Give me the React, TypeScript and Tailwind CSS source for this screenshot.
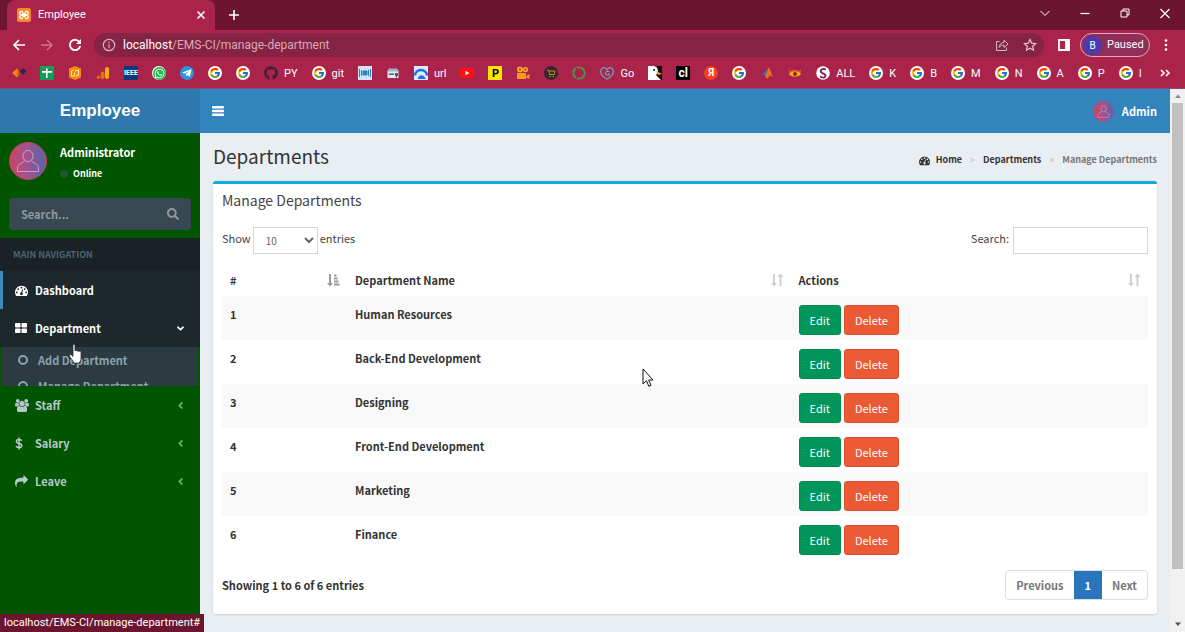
import type { ReactNode } from "react";
import { FcGoogle } from "react-icons/fc";
import { FaAngleDown, FaAngleLeft, FaGithub, FaSearch, FaWhatsapp, FaTelegramPlane } from "react-icons/fa";

const PAGE_FONT = "font-['Noto_Sans_CJK_SC',sans-serif]";
const CHROME_FONT = "font-['Roboto',sans-serif]";

/* ---------- icons ---------- */

function DashboardIcon({ className }: { className: string }) {
  return (
    <svg viewBox="0 0 1792 1792" fill="currentColor" className={className} aria-hidden="true">
      <path d="M384 1152q0-53-37.5-90.5t-90.5-37.5-90.5 37.5-37.5 90.5 37.5 90.5 90.5 37.5 90.5-37.5 37.5-90.5zm192-448q0-53-37.5-90.5t-90.5-37.5-90.5 37.5-37.5 90.5 37.5 90.5 90.5 37.5 90.5-37.5 37.5-90.5zm428 481l101-382q6-26-7.5-48.5t-38.5-29.5-48 6.5-30 39.5l-101 382q-60 5-107 43.5t-63 98.5q-20 77 20 146t117 89 146-20 89-117q16-60-6-117t-72-91zm660-33q0-53-37.5-90.5t-90.5-37.5-90.5 37.5-37.5 90.5 37.5 90.5 90.5 37.5 90.5-37.5 37.5-90.5zm-640-640q0-53-37.5-90.5t-90.5-37.5-90.5 37.5-37.5 90.5 37.5 90.5 90.5 37.5 90.5-37.5 37.5-90.5zm448 192q0-53-37.5-90.5t-90.5-37.5-90.5 37.5-37.5 90.5 37.5 90.5 90.5 37.5 90.5-37.5 37.5-90.5zm320 448q0 261-141 483-19 29-54 29h-1402q-35 0-54-29-141-221-141-483 0-182 71-348t191-286 286-191 348-71 348 71 286 191 191 286 71 348z" />
    </svg>
  );
}

function GridIcon() {
  return (
    <svg viewBox="0 0 12 12" fill="currentColor" className="size-3" aria-hidden="true">
      <rect x="0" y="1" width="5.5" height="4.5" rx=".8" />
      <rect x="6.5" y="1" width="5.5" height="4.5" rx=".8" />
      <rect x="0" y="6.5" width="5.5" height="4.5" rx=".8" />
      <rect x="6.5" y="6.5" width="5.5" height="4.5" rx=".8" />
    </svg>
  );
}

function UsersIcon() {
  return (
    <svg viewBox="0 0 1920 1792" fill="currentColor" className="h-[13px] w-3.5" aria-hidden="true">
      <path d="M593 896q-162 5-265 128h-134q-82 0-138-40.500t-56-118.500q0-353 124-353 6 0 43.500 21t97.500 42.500 119 21.500q67 0 133-23-5 37-5 66 0 139 81 256zm1071 637q0 120-73 189.500t-194 69.500h-874q-121 0-194-69.500t-73-189.500q0-53 3.500-103.500t14-109 26.500-108.500 43-97.500 62-81 85.500-53.500 111.500-20q10 0 43 21.500t73 48 107 48 135 21.500 135-21.500 107-48 73-48 43-21.500q61 0 111.500 20t85.500 53.500 62 81 43 97.500 26.500 108.500 14 109 3.500 103.500zm-1024-1277q0 106-75 181t-181 75-181-75-75-181 75-181 181-75 181 75 75 181zm704 384q0 159-112.500 271.500t-271.500 112.500-271.500-112.500-112.500-271.500 112.500-271.500 271.500-112.500 271.500 112.500 112.500 271.500zm576 225q0 78-56 118.500t-138 40.500h-134q-103-123-265-128 81-117 81-256 0-29-5-66 66 23 133 23 59 0 119-21.500t97.500-42.500 43.500-21q124 0 124 353zm-128-609q0 106-75 181t-181 75-181-75-75-181 75-181 181-75 181 75 75 181z" />
    </svg>
  );
}

function ShareArrowIcon() {
  return (
    <svg viewBox="0 0 1792 1792" fill="currentColor" className="size-[13px]" aria-hidden="true">
      <path d="M1792 640q0 26-19 45l-512 512q-19 19-45 19t-45-19-19-45v-256h-224q-98 0-175.5 6t-154 21.5-133 42.5-105.5 69.5-80 101-48.5 138.5-17.5 181q0 55 5 123 0 6 2.5 23.5t2.5 26.5q0 15-8.5 25t-23.5 10q-16 0-28-17-7-9-13-22t-13.5-30-10.5-24q-127-285-127-451 0-199 53-333 162-403 875-403h224v-256q0-26 19-45t45-19 45 19l512 512q19 19 19 45z" />
    </svg>
  );
}

function DollarIcon() {
  return (
    <svg viewBox="0 0 8 13" fill="none" stroke="currentColor" strokeWidth="1.5" className="h-[13px] w-2" aria-hidden="true">
      <path d="M4 .5v12M6.8 3.6C6 2.8 5 2.4 4 2.4 2.500 2.400 1.400 3.200 1.400 4.400 1.400 7.200 6.800 5.600 6.800 8.500 6.800 9.800 5.600 10.600 4 10.600 2.800 10.600 1.700 10.100.9 9.300" />
    </svg>
  );
}

function Avatar({ className, id }: { className: string; id: string }) {
  return (
    <svg viewBox="0 0 38 38" className={className} role="img" aria-label="User image">
      <defs>
        <linearGradient id={id} x1="0" y1="0" x2="1" y2="0">
          <stop offset="0" stopColor="#c94565" />
          <stop offset=".45" stopColor="#a5528a" />
          <stop offset=".9" stopColor="#5f62a8" />
          <stop offset="1" stopColor="#b04a6c" />
        </linearGradient>
      </defs>
      <circle cx="19" cy="19" r="18.500" fill={`url(#${id})`} stroke="#c4405c" />
      <ellipse cx="19" cy="14" rx="5" ry="5.700" fill="none" stroke="#d9a3cf" strokeWidth=".9" />
      <path d="M15.500 18.500C15 21 8.500 21.500 8.500 26v3.500h21V26c0-4.500-6.500-5-7-7.500" fill="none" stroke="#d9a3cf" strokeWidth=".9" />
    </svg>
  );
}

function SortBothIcon() {
  return (
    <svg viewBox="0 0 14 14" fill="#cfcfcf" className="size-3.5" aria-hidden="true">
      <path d="M3 1h2v9h2l-3 3.500L1 10h2zM9.500 13h2V4h2l-3-3.500L7.500 4h2z" />
    </svg>
  );
}

function SortAscIcon() {
  return (
    <svg viewBox="0 0 14 14" fill="#9a9a9a" className="size-3.5" aria-hidden="true">
      <path d="M3 1h2v9h2l-3 3.500L1 10h2zM8 1.500h2.500v2H8zM8 4.500h3.500v2H8zM8 7.500h4.500v2H8zM8 10.500h5.500v2H8z" />
    </svg>
  );
}

function Tile({ className, children }: { className: string; children?: ReactNode }) {
  return <span className={`flex size-3.5 shrink-0 items-center justify-center ${className}`}>{children}</span>;
}

const google = (
  <Tile className="rounded-full bg-white">
    <FcGoogle className="size-3" />
  </Tile>
);

function Glyph({ children }: { children: ReactNode }) {
  return (
    <svg viewBox="0 0 14 14" className="size-3.5 shrink-0" aria-hidden="true">
      {children}
    </svg>
  );
}

const bookmarks: { icon: ReactNode; label?: string; name: string }[] = [
  { name: "Diamonds", icon: <Glyph><path d="M0 7l5-4.500v9z" fill="#f58220" /><path d="M5 2.500L7 5v4l-2 2.500z" fill="#e0691a" /><path d="M8 5l3-3L14 5l-3 4z" fill="#1f2a44" /></Glyph> },
  { name: "Sheets", icon: <Glyph><path d="M0 0h14v14H0z" fill="#0f9d58" /><path d="M6 2.500h1.600v9.500H6zM2 5h10v1.700H2z" fill="#fff" /></Glyph> },
  { name: "Hexagon", icon: <Glyph><path d="M1 2.500L7 0l6 2.500v9L7 14l-6-2.500z" fill="#f58a0b" /><path d="M3.500 5l2-1M3.500 5v5h3V6.500M8 10l2.500-1V4L7 5" stroke="#ffe9b0" fill="none" /></Glyph> },
  { name: "Analytics", icon: <Glyph><rect x="9" y="1" width="4" height="12" rx="2" fill="#f9ab00" /><rect x="4.700" y="5.500" width="3.800" height="7.500" rx="1.900" fill="#e8710a" /><circle cx="2.500" cy="11.300" r="1.700" fill="#e8710a" /></Glyph> },
  { name: "IEEE Xplore", icon: <Tile className="bg-[#0a3a7a] text-[7px] leading-none font-bold text-white">IEEE</Tile> },
  { name: "WhatsApp", icon: <Tile className="rounded-full bg-white"><span className="flex size-[13px] items-center justify-center rounded-full bg-[#25b84c]"><FaWhatsapp className="size-[11px] text-white" /></span></Tile> },
  { name: "Telegram", icon: <Tile className="rounded-full bg-[#2b93e0]"><FaTelegramPlane className="size-2.5 text-white" /></Tile> },
  { name: "Google", icon: google },
  { name: "Google", icon: google },
  { name: "Python", icon: <FaGithub className="size-3.5 shrink-0 text-[#3d2232]" />, label: "PY" },
  { name: "Git", icon: google, label: "git" },
  { name: "Columns", icon: <Glyph><path d="M0 0h14v14H0z" fill="#cfe6f7" /><path d="M1.500 3v8M3.500 4v6M12.500 3v8M10.500 4v6M5 5h4v4H5z" stroke="#2d7fc1" fill="#2d7fc1" /></Glyph> },
  { name: "Store", icon: <Glyph><path d="M1.500 5h11v7h-11z" fill="#e5e9ee" /><path d="M3 2.500h8l2 3H1z" fill="#9fb4c8" /><path d="M3 7.500h5v1.500H3zM9 7h3v2l-1.500 3L9 9z" fill="#4c5866" /></Glyph> },
  { name: "URL", icon: <Glyph><path d="M0 0h14v14H0z" fill="#dce9f8" /><path d="M1 9.500a6 5.500 0 0 1 12 0" stroke="#1a73e8" strokeWidth="2.400" fill="none" /><path d="M4 13a3.500 3.500 0 0 1 6.500-2l1.500 2z" fill="#1a73e8" /></Glyph>, label: "url" },
  { name: "YouTube", icon: <Glyph><rect x="0" y="2" width="14" height="10" rx="2.500" fill="#f11" /><path d="M5.500 4.800v4.400L9.300 7z" fill="#fff" /></Glyph> },
  { name: "P", icon: <Tile className="bg-[#ffe600] text-[11px] leading-none font-bold text-black">P</Tile> },
  { name: "Movies", icon: <Glyph><circle cx="4" cy="3.500" r="3" fill="#f6a821" /><circle cx="9.500" cy="3.500" r="2.600" fill="#f6a821" /><path d="M1 7h9v6H1zM10.500 10l3-2v5l-3-1z" fill="#f39a1c" /><circle cx="4" cy="3.500" r="1" fill="#a9234a" /><circle cx="9.500" cy="3.500" r="1" fill="#a9234a" /></Glyph> },
  { name: "Cart", icon: <Glyph><circle cx="7" cy="7" r="7" fill="#33272a" /><path d="M3 4h1.500l1.200 4.500h4.500L11 5H5" stroke="#c98a2b" fill="none" /><circle cx="6" cy="10.500" r=".8" fill="#c98a2b" /><circle cx="9.500" cy="10.500" r=".8" fill="#c98a2b" /></Glyph> },
  { name: "Ring", icon: <Glyph><circle cx="7" cy="7" r="5.700" stroke="#43a047" strokeWidth="1.800" strokeDasharray="11 .9" fill="none" /></Glyph> },
  { name: "Go", icon: <Glyph><path d="M7 13C2 10.500 0 7 1 4s4.500-3.500 6 0C8.500.5 12 1 13 4s-1 6.500-6 9zM9.500 5.500H7.500C5 5.500 4.500 9 7 9h2V7" stroke="#6aa6c8" strokeWidth="1.200" fill="none" /></Glyph>, label: "Go" },
  { name: "Bird", icon: <Glyph><path d="M0 0h14v14H0z" fill="#111" /><path d="M0 0h5c4 0 5 3 5 6L8 9l5 5H0z" fill="#fff" /><path d="M8 5l6 3-4 1z" fill="#f4b400" /><circle cx="6" cy="4" r="1" fill="#111" /></Glyph> },
  { name: "cl", icon: <Tile className="bg-black text-[12px] leading-none font-bold text-white">cl</Tile> },
  { name: "Yandex", icon: <Tile className="rounded-full bg-[#fc3f1d] text-[10px] leading-none font-bold text-white">Я</Tile> },
  { name: "Google", icon: google },
  { name: "Matlab", icon: <Glyph><path d="M1 8l4-2 4-5-3 9-2-1z" fill="#2f6fb5" /><path d="M9 1l4 10-3-1.500L7 13 5 10z" fill="#e2721d" /></Glyph> },
  { name: "Eye", icon: <Glyph><path d="M1 3.500l2 2 1.500-2 1.500 1.500L7 3l1 2 1.500-1.500L11 5.500l2-2-.5 4H1.500z" fill="#e9641a" /><path d="M1 8C3.500 4.800 10.500 4.800 13 8c-2.500 3.500-9.500 3.500-12 0z" fill="#f8a81e" /><circle cx="7" cy="8" r="2" fill="#7a2a1a" /></Glyph> },
  { name: "All", icon: <Glyph><circle cx="7" cy="7" r="6.800" fill="#fff" /><path d="M10 3.500C6 2 4 4 5 6s5 1.500 4.500 4-4 1.500-5.500.5" stroke="#7b2347" strokeWidth="1.800" fill="none" /></Glyph>, label: "ALL" },
  { name: "K", icon: google, label: "K" },
  { name: "B", icon: google, label: "B" },
  { name: "M", icon: google, label: "M" },
  { name: "N", icon: google, label: "N" },
  { name: "A", icon: google, label: "A" },
  { name: "P", icon: google, label: "P" },
  { name: "I", icon: google, label: "I" },
];

/* ---------- browser chrome ---------- */

function Stroke({ d, className, width = 1 }: { d: string; className: string; width?: number }) {
  return (
    <svg viewBox="0 0 14 14" fill="none" stroke="currentColor" strokeWidth={width} className={className} aria-hidden="true">
      <path d={d} />
    </svg>
  );
}

function TabStrip() {
  return (
    <div className="flex h-[30px] items-stretch bg-[#6b152f] pl-[7px] text-white">
      <div className="flex w-[208px] items-center rounded-t-lg bg-[#a9234a] pr-[7px] pl-2.5">
        <svg viewBox="0 0 14 14" className="size-3.5" aria-hidden="true">
          <rect width="14" height="14" rx="2" fill="#f5872a" />
          <path d="M4.500 3.200a1.700 1.700 0 1 0 0 3.400h5a1.700 1.700 0 1 0 0-3.400C8 3.200 6 10.800 4.500 10.800a1.700 1.700 0 1 1 0-3.400h5a1.700 1.700 0 1 1 0 3.400C8 10.800 6 3.200 4.500 3.200z" fill="none" stroke="#fff" strokeWidth="1.300" />
        </svg>
        <span className="ml-[7px] flex-1 text-[11px]">Employee</span>
        <button aria-label="Close tab"><Stroke d="M3.500 3.500l7 7M10.500 3.500l-7 7" className="size-3.5" width={1.5} /></button>
      </div>
      <button aria-label="New tab" className="ml-3"><Stroke d="M7 2v10M2 7h10" className="size-3.5" width={1.6} /></button>
      <div className="ml-auto flex items-center gap-[26px] pr-[13px] pb-1">
        <button aria-label="Search tabs"><Stroke d="M2.500 5L7 9.500 11.500 5" className="size-3.5" /></button>
        <button aria-label="Minimize"><Stroke d="M2.500 7.500h9" className="size-3.5" width={1.2} /></button>
        <button aria-label="Restore"><Stroke d="M3 5h6v6H3zM5 5V3h6v6H9" className="size-3.5" /></button>
        <button aria-label="Close window"><Stroke d="M2.500 3l9 9M11.500 3l-9 9" className="size-3.5" width={1.2} /></button>
      </div>
    </div>
  );
}

function Toolbar() {
  return (
    <div className="flex h-[30px] items-center bg-[#a9234a] pr-[17px] pl-3 text-white">
      <button aria-label="Back"><Stroke d="M13 7H2M7 2L2 7l5 5" className="size-3.5" width={1.7} /></button>
      <button aria-label="Forward" className="ml-3.5 text-[#d4748f]"><Stroke d="M1 7h11M7 2l5 5-5 5" className="size-3.5" width={1.4} /></button>
      <button aria-label="Reload" className="ml-3.5">
        <svg viewBox="0 0 14 14" fill="none" stroke="currentColor" strokeWidth="1.800" className="size-3.5" aria-hidden="true">
          <path d="M11.500 4.200A5.200 5.200 0 1 0 12.200 8" />
          <path d="M13 1v5H8z" fill="currentColor" stroke="none" />
        </svg>
      </button>
      <div className="ml-3 flex h-6 flex-1 items-center rounded-full bg-[#842343] pr-[7px] pl-2">
        <Stroke d="M7 1.300a5.700 5.700 0 1 0 0 11.400 5.700 5.700 0 1 0 0-11.400M7 6.200V10.200M7 3.800v1.400" className="size-3.5 text-[#d8b4c0]" width={1.2} />
        <span className="ml-[7px] flex-1 text-[12px] text-[#dca8b8]">
          <span className="text-white">localhost</span>/EMS-CI/manage-department
        </span>
        <button aria-label="Share" className="mr-3.5"><Stroke d="M4.500 3.500H1.500v9h10V9.500M4 9.500C4.500 6 6.500 4.500 9 4.500V2l4 4-4 3.500V7C7 7 5.300 7.600 4 9.500z" className="size-3.5 text-[#d8b4c0]" /></button>
        <button aria-label="Bookmark"><Stroke d="M7 1.500l1.700 3.600 3.900.5-2.900 2.700.8 3.900L7 10.300l-3.500 1.900.8-3.900L1.400 5.600l3.900-.5z" className="size-3.5 text-[#e6c6d0]" width={1.2} /></button>
      </div>
      <svg viewBox="0 0 12 12" className="ml-3.5 size-3" aria-hidden="true">
        <path d="M1 1h10v10H1z" fill="none" stroke="#fff" strokeWidth="1.800" />
        <path d="M7 1h4v10H7z" fill="#fff" />
      </svg>
      <button className="ml-2.5 flex h-6 w-[70px] items-center gap-[5px] rounded-full border border-[#e3a9ba] bg-[#8f2e58] pl-0.5 text-[11px]">
        <span className="flex size-[19px] items-center justify-center rounded-full bg-[#4c3bb0] text-[10px]">B</span>
        Paused
      </button>
      <svg viewBox="0 0 4 14" fill="currentColor" className="ml-3.5 h-3.5 w-1" aria-hidden="true">
        <circle cx="2" cy="2.500" r="1.300" /><circle cx="2" cy="7" r="1.300" /><circle cx="2" cy="11.500" r="1.300" />
      </svg>
    </div>
  );
}

function BookmarkBar() {
  return (
    <nav aria-label="Bookmarks" className="flex h-[29px] items-center gap-3.5 border-b border-[#7d4a7c] bg-[#a9234a] pr-[13px] pb-0.5 pl-3 text-[11px] text-white">
      {bookmarks.map((b, i) => (
        <a key={i} href="#" aria-label={b.name} className="flex shrink-0 items-center gap-1.5 leading-none">
          {b.icon}
          {b.label}
        </a>
      ))}
      <Stroke d="M3 4l3 3-3 3M8 4l3 3-3 3" className="ml-auto size-3.5 shrink-0" width={1.6} />
    </nav>
  );
}

/* ---------- application ---------- */

function NavItem({ icon, label, arrow, active, dark }: { icon: ReactNode; label: string; arrow?: "left" | "down"; active?: boolean; dark?: boolean }) {
  return (
    <a
      href="#"
      className={`flex h-[38px] items-center border-l-[3px] pr-3.5 pl-3 text-[11px] font-bold ${active ? "border-[#3c8dbc]" : "border-transparent"} ${dark ? "bg-[#1e282c] bg-clip-border text-white" : "text-[#b8c7ce]"}`}
    >
      <span className="flex w-5 items-center">{icon}</span>
      <span className="flex-1">{label}</span>
      {arrow === "left" && <FaAngleLeft className="size-[11px] text-[#5fbf5f]" />}
      {arrow === "down" && <FaAngleDown className="size-[11px]" />}
    </a>
  );
}

function SubItem({ label }: { label: string }) {
  return (
    <a href="#" className="flex h-[26px] shrink-0 items-center gap-2.5 pl-4 text-[11px] font-bold text-[#8aa4af]">
      <span className="size-2.5 rounded-full border-2 border-current" />
      {label}
    </a>
  );
}

function Sidebar() {
  return (
    <aside className="flex w-[200px] shrink-0 flex-col bg-[#005500]">
      <div className="flex gap-[13px] px-[9px] pt-[9px]">
        <Avatar className="size-[38px]" id="avatarLarge" />
        <div className="font-bold text-white">
          <p className="text-[11px] leading-5">Administrator</p>
          <a href="#" className="flex items-center gap-[5px] text-[9px] leading-6">
            <span className="size-2 rounded-full bg-[#21592b]" />
            Online
          </a>
        </div>
      </div>
      <form className="mx-[9px] mt-3 mb-2 flex h-8 items-center rounded-[3px] bg-[#374850] px-3">
        <input aria-label="Search menu" placeholder="Search..." className="w-0 flex-1 bg-transparent text-[11px] font-bold text-white outline-none placeholder:text-[#90999d]" />
        <button type="button" aria-label="Search"><FaSearch className="size-3 text-[#999]" /></button>
      </form>
      <p className="h-[33px] bg-[#1a2226] pl-[13px] text-[9px] leading-[34px] font-bold text-[#4b646f]">MAIN NAVIGATION</p>
      <nav aria-label="Main navigation">
        <NavItem icon={<DashboardIcon className="size-[13px]" />} label="Dashboard" active dark />
        <NavItem icon={<GridIcon />} label="Department" arrow="down" dark />
        <div className="mx-0.5 flex h-[39px] flex-col overflow-hidden bg-[#2c3b41]">
          <SubItem label="Add Department" />
          <SubItem label="Manage Department" />
        </div>
        <NavItem icon={<UsersIcon />} label="Staff" arrow="left" />
        <NavItem icon={<DollarIcon />} label="Salary" arrow="left" />
        <NavItem icon={<ShareArrowIcon />} label="Leave" arrow="left" />
      </nav>
    </aside>
  );
}

const departments = ["Human Resources", "Back-End Development", "Designing", "Front-End Development", "Marketing", "Finance"];

const columns = [
  { label: "#", icon: <SortAscIcon />, width: "w-[13.5%]" },
  { label: "Department Name", icon: <SortBothIcon />, width: "w-[47.9%]" },
  { label: "Actions", icon: <SortBothIcon />, width: "w-[38.6%]" },
];

function DepartmentTable() {
  return (
    <table className="mt-2.5 w-full table-fixed border-collapse text-left text-[11px] text-[#333]">
      <thead>
        <tr>
          {columns.map((c) => (
            <th key={c.label} className={`h-8 pr-[7px] pl-2 ${c.width}`}>
              <span className="flex items-center justify-between">
                {c.label}
                {c.icon}
              </span>
            </th>
          ))}
        </tr>
      </thead>
      <tbody>
        {departments.map((name, i) => (
          <tr key={name} className="h-11 align-top odd:bg-[#f8f8f8]">
            <td className="px-2 pt-[9px] leading-[18px] font-bold">{i + 1}</td>
            <td className="px-2 pt-[9px] leading-[18px] font-bold">{name}</td>
            <td className="px-2 pt-[9px]">
              <div className="flex gap-[3px] text-white">
                <button className="h-[30px] rounded-[3px] border border-[#008d4c] bg-[#00955a] px-2.5">Edit</button>
                <button className="h-[30px] rounded-[3px] border border-[#d9502f] bg-[#eb5a35] px-2.5">Delete</button>
              </div>
            </td>
          </tr>
        ))}
      </tbody>
    </table>
  );
}

function Content() {
  return (
    <main className="min-w-0 flex-1 bg-[#e9eef3] px-[13px] text-[#444]">
      <div className="flex h-12 items-center justify-between">
        <h1 className="pb-0.5 text-[19px] text-[#333]">Departments</h1>
        <nav aria-label="Breadcrumb" className="flex items-center gap-2 pt-1.5 text-[9px] font-bold">
          <a href="#" className="flex items-center gap-1.5 text-[#333]"><DashboardIcon className="size-[11px]" />Home</a>
          <span className="font-normal text-[#bbb]">&gt;</span>
          <a href="#" className="text-[#333]">Departments</a>
          <span className="font-normal text-[#bbb]">&gt;</span>
          <span className="text-[#777]">Manage Departments</span>
        </nav>
      </div>
      <section className="rounded-[3px] border-t-[3px] border-[#12aadf] bg-white px-[9px] pb-3.5 shadow-sm">
        <h2 className="h-8 text-[14px] leading-8">Manage Departments</h2>
        <div className="mt-[11px] flex items-center justify-between text-[11px]">
          <label className="flex items-center gap-0.5">
            <span className="pb-1">Show</span>
            <select defaultValue="10" className="h-[27px] w-[65px] border border-[#d2d6de] bg-white px-2 text-[10px] text-[#666]">
              <option>10</option>
              <option>25</option>
              <option>50</option>
              <option>100</option>
            </select>
            <span className="pb-1">entries</span>
          </label>
          <label className="flex items-center gap-1">
            <span className="pb-1">Search:</span>
            <input type="search" className="h-[27px] w-[135px] border border-[#d2d6de] bg-white px-2" />
          </label>
        </div>
        <DepartmentTable />
        <div className="mt-2.5 flex items-center justify-between text-[11px] font-bold text-[#333]">
          <p>Showing 1 to 6 of 6 entries</p>
          <div className="flex h-[30px] items-stretch overflow-hidden rounded-[4px] border border-[#ddd] text-[#777]">
            <button className="px-2.5">Previous</button>
            <button className="bg-[#2a76bc] px-[11px] text-white">1</button>
            <button className="px-2.5">Next</button>
          </div>
        </div>
      </section>
    </main>
  );
}

function Scrollbar() {
  return (
    <div className="flex w-[15px] flex-col items-center bg-[#f1f1f1]" aria-hidden="true">
      <svg viewBox="0 0 14 14" className="size-3.5" fill="#8a8a8a"><path d="M7 5.500l3 3.500H4z" /></svg>
      <div className="mb-12 w-[11px] flex-1 bg-[#c1c1c1]" />
      <svg viewBox="0 0 14 14" className="mb-px size-3.5" fill="#505050"><path d="M4 5.500h6L7 9z" /></svg>
    </div>
  );
}

export default function App() {
  return (
    <div className={`relative flex h-screen flex-col overflow-hidden ${PAGE_FONT}`}>
      <header className={CHROME_FONT}>
        <TabStrip />
        <Toolbar />
        <BookmarkBar />
      </header>
      <div className="flex min-h-0 flex-1">
        <div className="flex min-w-0 flex-1 flex-col">
          <div className="flex h-11 shrink-0 items-stretch bg-[#3284bd] text-white">
            <a href="#" className="flex w-[200px] items-center justify-center bg-[#2f78ad] font-['Liberation_Sans',sans-serif] text-[17px] font-bold">Employee</a>
            <button aria-label="Toggle navigation" className="px-3">
              <svg viewBox="0 0 12 12" fill="currentColor" className="size-3" aria-hidden="true">
                <rect y="1" width="12" height="2.600" rx=".8" /><rect y="4.700" width="12" height="2.600" rx=".8" /><rect y="8.400" width="12" height="2.600" rx=".8" />
              </svg>
            </button>
            <a href="#" className="ml-auto flex items-center gap-2 pr-[13px] text-[11px] font-bold">
              <Avatar className="size-[21px]" id="avatarSmall" />
              Admin
            </a>
          </div>
          <div className="flex min-h-0 flex-1">
            <Sidebar />
            <Content />
          </div>
        </div>
        <Scrollbar />
      </div>

      <div className={`absolute bottom-0 left-0 flex h-[18px] items-center bg-[#6b152f] px-1 text-[11px] whitespace-nowrap text-white ${CHROME_FONT}`}>
        localhost/EMS-CI/manage-department#
      </div>
      <svg viewBox="0 0 14 20" className="absolute top-[344px] left-[69px] h-5 w-3.5" aria-hidden="true">
        <path d="M4 1.500c0-1.300 2-1.300 2 0V7c0-1 2-1 2 .3 0-1 2-.9 2 .4 0-.9 2-.8 2 .6V14c0 2-1 3-1.500 5H5c-.5-2-4-5.500-4.500-7-.5-1.400 1.500-2 2.300-.6L4 12.500z" fill="#fff" stroke="#222" strokeWidth=".7" />
      </svg>
      <svg viewBox="0 0 12 20" className="absolute top-[368px] left-[642px] h-5 w-3" aria-hidden="true">
        <path d="M1 1v15l3.500-3.300 2.300 5.600 2.200-1-2.300-5.300H11z" fill="#fff" stroke="#111" />
      </svg>
    </div>
  );
}
